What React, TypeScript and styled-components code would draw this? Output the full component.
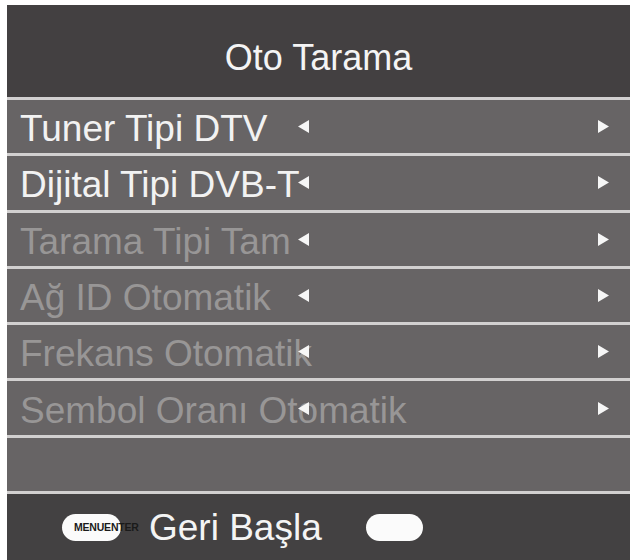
import React from 'react';
import styled, { createGlobalStyle } from 'styled-components';

const GlobalStyle = createGlobalStyle`
    html, body {
        margin: 0;
        padding: 0;
        background: #ffffff;
        overflow: hidden;
    }
    body {
        font-family: "Liberation Sans", Arial, sans-serif;
    }
`;

const Page = styled.div`
    width: 634px;
    height: 560px;
    padding: 5px 4px 0 7px;
    box-sizing: border-box;
    overflow: hidden;
`;

const Panel = styled.div`
    display: flex;
    flex-direction: column;
    width: 623px;
    background: #434041;
`;

const Title = styled.header`
    height: 92px;
    display: flex;
    align-items: center;
    justify-content: center;
    color: #f4f4f4;
    font-size: 36px;
    padding-top: 14px;
    box-sizing: border-box;
`;

const Row = styled.div<{ dim: boolean }>`
    display: grid;
    grid-template-columns: 278px 11px 289px 11px;
    align-items: center;
    height: 53.3px;
    padding-left: 13px;
    border-top: 3px solid #d2d0d0;
    background: #676465;
    color: ${props => props.dim ? "#989696" : "#f2f2f2"};
    font-size: 37px;
`;

const Label = styled.span`
    white-space: nowrap;
    overflow: visible;
    padding-top: 5px;
`;

const Arrow = styled.svg`
    display: block;
    width: 11px;
    height: 13px;
    position: relative;
    z-index: 1;
`;

const Footer = styled.footer`
    display: flex;
    align-items: center;
    height: 66px;
    padding-left: 55px;
    border-top: 3px solid #d2d0d0;
    background: #434142;
    color: #f4f4f4;
`;

const Pill = styled.div<{ width: number }>`
    width: ${props => props.width}px;
    height: 27px;
    border-radius: 14px;
    background: #fbfbfb;
    display: flex;
    align-items: center;
    flex-shrink: 0;
`;

const KeyText = styled.span`
    padding-left: 12px;
    font-size: 10.5px;
    font-weight: bold;
    letter-spacing: -0.2px;
    color: #1a1a1a;
    white-space: nowrap;
`;

const FooterText = styled.span`
    font-size: 37px;
    margin-left: 28px;
    margin-right: 44px;
    padding-top: 2px;
`;

const items = [
    { label: "Tuner Tipi DTV", dim: false },
    { label: "Dijital Tipi DVB-T", dim: false },
    { label: "Tarama Tipi Tam", dim: true },
    { label: "Ağ ID Otomatik", dim: true },
    { label: "Frekans Otomatik", dim: true },
    { label: "Sembol Oranı Otomatik", dim: true },
];

function LeftArrow()
{
    return (
        <Arrow viewBox="0 0 11 13">
            <polygon points="11,0 11,13 0,6.5" fill="#f6f6f6" />
        </Arrow>
    );
}

function RightArrow()
{
    return (
        <Arrow viewBox="0 0 11 13">
            <polygon points="0,0 0,13 11,6.5" fill="#f6f6f6" />
        </Arrow>
    );
}

export default function App()
{
    return (
        <React.Fragment>
            <GlobalStyle />
            <Page>
                <Panel>
                    <Title>Oto Tarama</Title>

                    {items.map(item => (
                        <Row key={item.label} dim={item.dim}>
                            <Label>{item.label}</Label>
                            <LeftArrow />
                            <span />
                            <RightArrow />
                        </Row>
                    ))}

                    <Row dim={true} />

                    <Footer>
                        <Pill width={59}>
                            <KeyText>MENUENTER</KeyText>
                        </Pill>
                        <FooterText>Geri Başla</FooterText>
                        <Pill width={57} />
                    </Footer>
                </Panel>
            </Page>
        </React.Fragment>
    );
}
